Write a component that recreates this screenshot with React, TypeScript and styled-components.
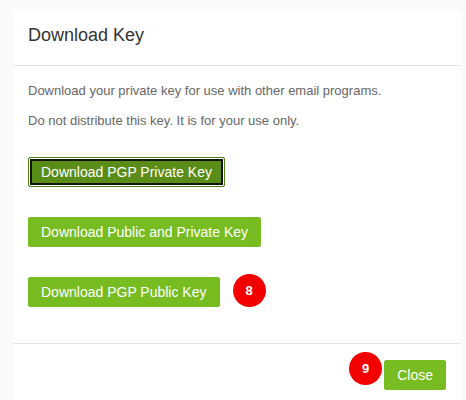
import React from "react";
import styled, { createGlobalStyle } from "styled-components";

const Global = createGlobalStyle`
  html, body {
    margin: 0;
    padding: 0;
    background: #fafafa;
    font-family: "Liberation Sans", Arial, sans-serif;
  }
`;

const Page = styled.div`
  padding: 11px 5px 0 13px;
  height: 400px;
  box-sizing: border-box;
  overflow: hidden;
`;

const Modal = styled.div`
  background: #fff;
  display: flex;
  flex-direction: column;
`;

const Header = styled.div`
  padding: 12px 15px 18px;
  border-bottom: 1px solid #e5e5e5;
`;

const Title = styled.h4`
  margin: 0;
  font-size: 18px;
  line-height: 24px;
  font-weight: normal;
  color: #333;
`;

const Body = styled.div`
  padding: 15px 15px 15px;
`;

const Text = styled.p`
  margin: 0 0 10px;
  font-size: 13px;
  line-height: 20px;
  color: #666;
`;

const ButtonList = styled.div`
  display: flex;
  flex-direction: column;
  align-items: flex-start;
  gap: 30px;
  padding: 16px 0 21px;
`;

const Row = styled.div`
  display: flex;
  align-items: flex-start;
  gap: 13px;
`;

const Button = styled.button<{ $focused?: boolean }>`
  font-family: "Liberation Sans", Arial, sans-serif;
  font-size: 14px;
  line-height: 20px;
  padding: 4px 12px;
  border-radius: 2px;
  color: #fff;
  cursor: pointer;
  background: ${(p) => (p.$focused ? "#5a8c18" : "#77bc21")};
  border: 1px solid ${(p) => (p.$focused ? "#4f8414" : "#77bc21")};
  box-shadow: ${(p) =>
    p.$focused ? "inset 0 0 0 1px #fff, inset 0 0 0 3px #141414" : "none"};
  white-space: nowrap;
`;

const Badge = styled.span<{ $lift: number }>`
  width: 33px;
  height: 33px;
  margin-top: ${(p) => -p.$lift}px;
  border-radius: 50%;
  background: #f40000;
  color: #fff;
  font-weight: bold;
  font-size: 13px;
  display: flex;
  align-items: center;
  justify-content: center;
  flex-shrink: 0;
`;

const Footer = styled.div`
  border-top: 1px solid #e5e5e5;
  padding: 16px 15px 15px;
  display: flex;
  justify-content: flex-end;
  align-items: flex-start;
  gap: 2px;
`;

export default function App() {
  return (
    <>
      <Global />
      <Page>
        <Modal>
          <Header>
            <Title>Download Key</Title>
          </Header>
          <Body>
            <Text>Download your private key for use with other email programs.</Text>
            <Text>Do not distribute this key. It is for your use only.</Text>
            <ButtonList>
              <Button $focused>Download PGP Private Key</Button>
              <Button>Download Public and Private Key</Button>
              <Row>
                <Button>Download PGP Public Key</Button>
                <Badge $lift={3}>8</Badge>
              </Row>
            </ButtonList>
          </Body>
          <Footer>
            <Badge $lift={8}>9</Badge>
            <Button>Close</Button>
          </Footer>
        </Modal>
      </Page>
    </>
  );
}
